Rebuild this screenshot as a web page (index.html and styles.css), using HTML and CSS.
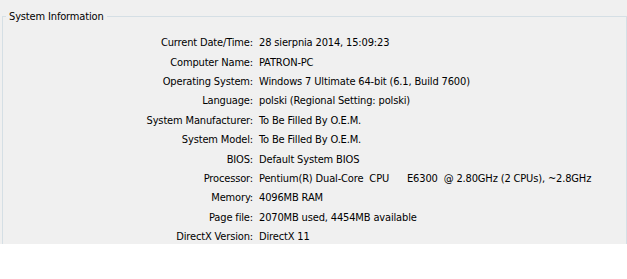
FILE: index.html
```html
<!DOCTYPE html>
<html>
<head>
<meta charset="utf-8">
<link rel="stylesheet" href="styles.css">
</head>
<body>
<div class="panel">
  <fieldset class="group">
    <legend class="title">System Information</legend>
    <div class="rows">
      <div class="label">Current Date/Time:</div><div class="value">28 sierpnia 2014, 15:09:23</div>
      <div class="label">Computer Name:</div><div class="value">PATRON-PC</div>
      <div class="label">Operating System:</div><div class="value">Windows 7 Ultimate 64-bit (6.1, Build 7600)</div>
      <div class="label">Language:</div><div class="value">polski (Regional Setting: polski)</div>
      <div class="label">System Manufacturer:</div><div class="value">To Be Filled By O.E.M.</div>
      <div class="label">System Model:</div><div class="value">To Be Filled By O.E.M.</div>
      <div class="label">BIOS:</div><div class="value">Default System BIOS</div>
      <div class="label">Processor:</div><div class="value">Pentium(R) Dual-Core  CPU      E6300  @ 2.80GHz (2 CPUs), ~2.8GHz</div>
      <div class="label">Memory:</div><div class="value">4096MB RAM</div>
      <div class="label">Page file:</div><div class="value">2070MB used, 4454MB available</div>
      <div class="label">DirectX Version:</div><div class="value">DirectX 11</div>
    </div>
  </fieldset>
</div>
</body>
</html>
```
FILE: styles.css
```css
html, body {
  margin: 0;
  padding: 0;
  background: #ffffff;
}
body {
  font-family: "DejaVu Sans Condensed", "DejaVu Sans", sans-serif;
  font-size: 11px;
  letter-spacing: -0.15px;
  color: #000;
}
.panel {
  background: #f0f0f0;
  height: 244px;
  overflow: hidden;
  padding: 10px 0 0 2px;
  box-sizing: border-box;
}
.group {
  margin: 0;
  padding: 10px 0 40px 0;
  border: 1px solid #d5dfe5;
  min-width: 0;
}
.title {
  padding: 0 3px 0 3px;
  margin-left: 3px;
  line-height: 13px;
}
.rows {
  display: grid;
  grid-template-columns: 250px 1fr;
  column-gap: 6px;
  grid-auto-rows: 19.4px;
  align-items: center;
}
.label {
  text-align: right;
  white-space: nowrap;
}
.value {
  white-space: pre;
}
```
